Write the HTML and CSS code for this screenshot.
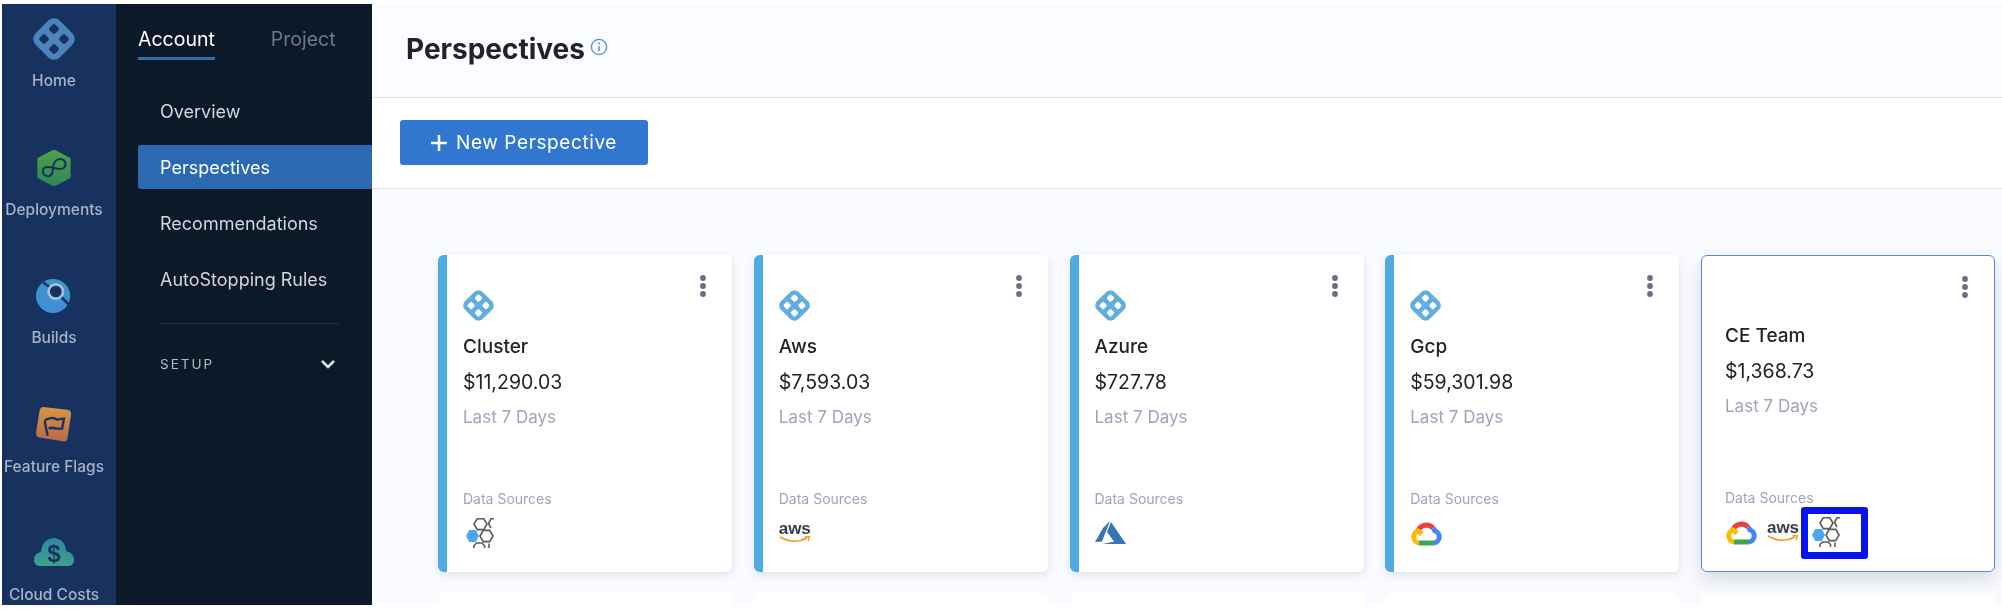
FILE: index.html
```html
<!DOCTYPE html>
<html>
	<head>
		<meta charset="UTF-8">
		<title>Perspectives</title>
		<link rel="stylesheet" href="styles.css">
	</head>
	<body>
		<svg class="defs" width="0" height="0">
			<defs>
				<linearGradient id="g-green" x1="0" y1="0" x2="0" y2="1"><stop offset="0" stop-color="#4ea04a"/><stop offset="1" stop-color="#2f8758"/></linearGradient>
				<linearGradient id="g-blue" x1="0" y1="0" x2="0" y2="1"><stop offset="0" stop-color="#3f93c8"/><stop offset="1" stop-color="#3f8edc"/></linearGradient>
				<linearGradient id="g-orange" x1="0" y1="0" x2="0" y2="1"><stop offset="0" stop-color="#d5973f"/><stop offset="1" stop-color="#b8694f"/></linearGradient>
				<linearGradient id="g-teal" x1="0" y1="0" x2="0" y2="1"><stop offset="0" stop-color="#2f88a0"/><stop offset="1" stop-color="#3fa08c"/></linearGradient>
			</defs>
			<symbol id="logo" viewBox="0 0 42 42">
				<rect x="4" y="4" width="34" height="34" rx="8" transform="rotate(45 21 21)" fill="currentColor"/>
				<g fill="var(--hole)">
					<rect x="17" y="7" width="8" height="8" rx="2" transform="rotate(45 21 11)"/>
					<rect x="17" y="27" width="8" height="8" rx="2" transform="rotate(45 21 31)"/>
					<rect x="7" y="17" width="8" height="8" rx="2" transform="rotate(45 11 21)"/>
					<rect x="27" y="17" width="8" height="8" rx="2" transform="rotate(45 31 21)"/>
				</g>
			</symbol>
			<symbol id="kube" viewBox="0 0 28 30">
				<g fill="none" stroke="#5a5a5a" stroke-width="1.6">
					<path d="M8 6 L11.25 .8 L17.75 .8 L21 6 L17.75 11.6 L11.25 11.6 Z"/>
					<path d="M14 18 L17.25 12.4 L23.75 12.4 L27 18 L23.75 23.6 L17.25 23.6 Z"/>
					<path d="M28 .8 L25 .8 L22.5 5.5 L25 10"/>
					<path d="M8 30 L8 27.5 L10.5 25 L16 25 L18.5 27.5 L18.5 30"/>
					<path d="M23 30 L23 25.5"/>
				</g>
				<path d="M0 18 L3.25 12 L9.75 12 L13 18 L9.75 24 L3.25 24 Z" fill="#4ea5f2"/>
			</symbol>
			<symbol id="azure" viewBox="0 0 32 24">
				<path d="M15 0 L8 7 L0 21 L7 20.5 Z" fill="#3a75b4"/>
				<path d="M16 1 L12 11 L19 20.5 L8 23 L31 23 Z" fill="#3575b5"/>
			</symbol>
			<symbol id="gcp" viewBox="0 0 32 26">
				<g fill="none" stroke-width="5">
					<path d="M8 11 A9 9 0 0 1 23 8" stroke="#ea4335"/>
					<path d="M23 8 A9 9 0 0 1 25 11 A6.2 6.2 0 0 1 24 23" stroke="#4285f4"/>
					<path d="M24 23 L9 23" stroke="#34a853"/>
					<path d="M9 23 A6.2 6.2 0 0 1 8 11 L12 14" stroke="#fbbc05"/>
				</g>
			</symbol>
			<symbol id="smile" viewBox="0 0 32 8">
				<path d="M1 1 Q15 9 28 2" fill="none" stroke="#f39a1e" stroke-width="1.7"/>
				<path d="M25.5 .8 L30.5 .5 L29 5" fill="none" stroke="#f39a1e" stroke-width="1.3"/>
			</symbol>
			<symbol id="dots" viewBox="0 0 6 22">
				<circle cx="3" cy="3" r="2.9"/>
				<circle cx="3" cy="11" r="2.9"/>
				<circle cx="3" cy="19" r="2.9"/>
			</symbol>
		</svg>

		<div class="frame">
			<div class="rail">
				<a class="rail-item">
					<div class="rail-slot"><svg class="rail-logo"><use href="#logo"/></svg></div>
					<span>Home</span>
				</a>
				<a class="rail-item">
					<div class="rail-slot">
						<svg class="rail-icon" viewBox="0 0 40 40">
							<path d="M20 1 L37 10 L37 30 L20 39 L3 30 L3 10 Z" fill="url(#g-green)" stroke="url(#g-green)" stroke-width="3" stroke-linejoin="round"/>
							<path d="M12 29 C6 27 6 19 13 19 C18 19 22 21 27 21 C34 21 35 12 28 10 C22 9 19 15 19 20 C19 26 17 30 12 29 Z" fill="none" stroke="#17325f" stroke-width="2.2"/>
						</svg>
					</div>
					<span>Deployments</span>
				</a>
				<a class="rail-item">
					<div class="rail-slot">
						<svg class="rail-icon" viewBox="0 0 40 40">
							<circle cx="19" cy="20" r="19" fill="url(#g-blue)"/>
							<path d="M8 5 L15 10 M27 20 L38 31" stroke="#17325f" stroke-width="3"/>
							<circle cx="22" cy="15" r="8" fill="#17325f" stroke="#a5c0de" stroke-width="3"/>
						</svg>
					</div>
					<span>Builds</span>
				</a>
				<a class="rail-item">
					<div class="rail-slot">
						<svg class="rail-icon" viewBox="0 0 40 40">
							<path d="M8 0 L35 3 Q39 4 39 8 L35 35 Q34 39 30 38 L4 34 Q0 33 0 29 L4 4 Q5 0 8 0 Z" fill="url(#g-orange)"/>
							<path d="M13 32 L10 18 Q9 14 14 13 Q20 11 23 14 L31 13 L29 24 L22 24 Q18 22 14 24" fill="none" stroke="#17325f" stroke-width="2.6"/>
						</svg>
					</div>
					<span>Feature Flags</span>
				</a>
				<a class="rail-item">
					<div class="rail-slot">
						<svg class="rail-cloud" viewBox="0 0 40 30">
							<path d="M5 28 Q0 27 0 22 Q0 15 7 14 Q8 1 20 0 Q31 1 32 13 Q40 15 40 22 Q40 27 35 28 Z" fill="url(#g-teal)"/>
							<text x="20" y="24" text-anchor="middle" class="cloud-text">$</text>
						</svg>
					</div>
					<span>Cloud Costs</span>
				</a>
			</div>

			<div class="nav">
				<div class="tabs">
					<a class="tab tab-on">Account</a>
					<a class="tab">Project</a>
				</div>
				<a class="nav-item">Overview</a>
				<a class="nav-item nav-on">Perspectives</a>
				<a class="nav-item">Recommendations</a>
				<a class="nav-item">AutoStopping Rules</a>
				<div class="nav-line"></div>
				<div class="setup">
					<span>SETUP</span>
					<svg class="chev" viewBox="0 0 16 10"><path d="M2 2 L8 8 L14 2" fill="none" stroke="#dfe3ea" stroke-width="2.6"/></svg>
				</div>
			</div>

			<div class="main">
				<div class="head">
					<h1>Perspectives</h1>
					<svg class="info" viewBox="0 0 18 18">
						<circle cx="9" cy="9" r="7.6" fill="none" stroke="#4a8fe0" stroke-width="1.3"/>
						<path d="M9 8 L9 13" stroke="#4a8fe0" stroke-width="1.5"/>
						<circle cx="9" cy="5.4" r="1" fill="#4a8fe0"/>
					</svg>
				</div>
				<div class="bar">
					<a class="btn">
						<svg class="plus" viewBox="0 0 16 16"><path d="M8 0 L8 16 M0 8 L16 8" stroke="#fff" stroke-width="2.5"/></svg>
						New Perspective
					</a>
				</div>
				<div class="grid">
					<div class="card">
						<svg class="kebab"><use href="#dots"/></svg>
						<svg class="card-logo"><use href="#logo"/></svg>
						<div class="name">Cluster</div>
						<div class="cost">$11,290.03</div>
						<div class="range">Last 7 Days</div>
						<div class="src-label">Data Sources</div>
						<div class="srcs"><svg class="src-kube"><use href="#kube"/></svg></div>
					</div>
					<div class="card">
						<svg class="kebab"><use href="#dots"/></svg>
						<svg class="card-logo"><use href="#logo"/></svg>
						<div class="name">Aws</div>
						<div class="cost">$7,593.03</div>
						<div class="range">Last 7 Days</div>
						<div class="src-label">Data Sources</div>
						<div class="srcs">
							<div class="src-aws"><span class="aws-text">aws</span><svg class="aws-smile"><use href="#smile"/></svg></div>
						</div>
					</div>
					<div class="card">
						<svg class="kebab"><use href="#dots"/></svg>
						<svg class="card-logo"><use href="#logo"/></svg>
						<div class="name">Azure</div>
						<div class="cost">$727.78</div>
						<div class="range">Last 7 Days</div>
						<div class="src-label">Data Sources</div>
						<div class="srcs"><svg class="src-azure"><use href="#azure"/></svg></div>
					</div>
					<div class="card">
						<svg class="kebab"><use href="#dots"/></svg>
						<svg class="card-logo"><use href="#logo"/></svg>
						<div class="name">Gcp</div>
						<div class="cost">$59,301.98</div>
						<div class="range">Last 7 Days</div>
						<div class="src-label">Data Sources</div>
						<div class="srcs"><svg class="src-gcp"><use href="#gcp"/></svg></div>
					</div>
					<div class="card card-team">
						<svg class="kebab"><use href="#dots"/></svg>
						<div class="name">CE Team</div>
						<div class="cost">$1,368.73</div>
						<div class="range">Last 7 Days</div>
						<div class="src-label">Data Sources</div>
						<div class="srcs">
							<svg class="src-gcp"><use href="#gcp"/></svg>
							<div class="src-aws"><span class="aws-text">aws</span><svg class="aws-smile"><use href="#smile"/></svg></div>
							<span class="mark-wrap">
								<svg class="src-kube"><use href="#kube"/></svg>
								<span class="mark"></span>
							</span>
						</div>
					</div>
					<div class="card-blank"></div>
					<div class="card-blank"></div>
					<div class="card-blank"></div>
					<div class="card-blank"></div>
					<div class="card-blank"></div>
				</div>
			</div>
		</div>
	</body>
</html>
```

FILE: styles.css
```css
*{margin: 0;padding: 0;box-sizing: border-box;}
html,body{height: 100%;overflow: hidden;background: #fff;}
body{font-family: Inter,"Liberation Sans",sans-serif;}
a{display: block;}
.defs{position: absolute;}

.frame{display: flex;height: 614px;padding: 4px 0 9px 2px;filter: blur(.4px);}

/* left rail */
.rail{width: 114px;flex: none;background: #17325f;overflow: hidden;padding: 7px 10px 0 0;}
.rail-item{height: 128.5px;display: flex;flex-direction: column;align-items: center;color: #a8b2c9;font-size: 15.5px;font-weight: 500;white-space: nowrap;}
.rail-item span{display: block;line-height: 18px;margin-top: 5px;}
.rail-slot{flex: none;height: 56px;display: flex;align-items: center;justify-content: center;}
.rail-logo{width: 42px;height: 42px;color: #4a84bb;--hole: #17325f;}
.rail-icon{width: 36px;height: 36px;}
.rail-cloud{width: 40px;height: 30px;}
.cloud-text{font: 700 24px "Liberation Sans",sans-serif;fill: #17325f;}

/* second nav */
.nav{width: 256px;flex: none;background: #0b1929;padding: 0 0 0 22px;}
.tabs{display: flex;gap: 56px;height: 79px;padding-top: 23px;}
.tab{font-size: 19.5px;line-height: 24px;height: 33px;color: #6f7787;}
.tab-on{color: #fff;border-bottom: 3px solid #2f70aa;}
.nav-item{display: flex;align-items: center;height: 56px;padding-left: 22px;font-size: 18px;color: #d3d6db;}
.nav-on{height: 44px;margin: 6px 0;color: #fff;background: #2b69b3;border-radius: 3px 0 0 3px;}
.nav-line{height: 1px;margin: 16px 33px 0 22px;background: #222e3e;}
.setup{display: flex;justify-content: space-between;align-items: center;margin: 32px 33px 0 22px;font-size: 13.5px;letter-spacing: 2px;color: #b5b9c1;}
.chev{width: 16px;height: 10px;margin-right: 3px;}

/* main */
.main{flex: 1;min-width: 0;overflow: hidden;background: #fafbff;}
.head{height: 94px;display: flex;align-items: center;padding: 0 0 4px 34px;background: #fbfcff;border-bottom: 1px solid #dfe2ea;}
.head h1{font-size: 28px;font-weight: 700;color: #22222a;}
.info{width: 18px;height: 18px;margin: 0 0 4px 5px;}
.bar{height: 91px;padding: 22px 0 0 28px;background: #fff;border-bottom: 1.5px solid #dfe2ea;}
.btn{display: flex;align-items: center;gap: 9px;width: 248px;height: 45px;padding-left: 31px;background: #3177cf;border-radius: 3px;color: #fff;font-size: 19px;letter-spacing: .6px;}
.plus{width: 16px;height: 16px;}

.grid{display: grid;grid-template-columns: repeat(5,294px);grid-auto-rows: 317px;column-gap: 21.75px;row-gap: 21px;padding: 66px 0 0 66px;}
.card{position: relative;display: flex;flex-direction: column;background: #fff;border-left: 9px solid #4dabe0;border-radius: 6px;padding: 35px 0 0 16px;box-shadow: 0 3px 8px rgba(60,70,110,.14);}
.card-team{border: 1.5px solid #4a8fdc;padding: 68px 0 0 23px;box-shadow: 0 8px 18px rgba(60,70,110,.18);}
.card-blank{background: #fff;border-radius: 6px;}
.kebab{position: absolute;right: 26px;top: 20px;width: 6px;height: 22px;fill: #6b6c85;}
.card-logo{flex: none;width: 31px;height: 31px;color: #60ade0;--hole: #fff;margin-bottom: 14px;}
.name{font-size: 19px;line-height: 24px;color: #22222a;font-weight: 500;}
.cost{font-size: 19.5px;line-height: 24px;margin-top: 11px;color: #22222a;}
.range{font-size: 17px;line-height: 20px;margin-top: 13px;color: #a0a3bd;}
.src-label{margin-top: auto;font-size: 14px;line-height: 18px;color: #a0a3bd;}
.srcs{display: flex;align-items: center;gap: 10px;height: 30px;margin: 10px 0 24px;}
.src-kube{display: block;width: 28px;height: 30px;margin-left: 3px;}
.src-aws{width: 32px;height: 24px;display: flex;flex-direction: column;align-items: center;}
.aws-text{font: 700 17px/15px "Liberation Sans",sans-serif;color: #333e48;}
.aws-smile{width: 32px;height: 8px;}
.src-azure{width: 32px;height: 24px;}
.src-gcp{width: 32px;height: 26px;}
.mark-wrap{position: relative;display: block;height: 30px;}
.mark{position: absolute;left: -8px;top: -10px;width: 67px;height: 52px;border: 7px solid #0713ec;border-radius: 3px;}
```
